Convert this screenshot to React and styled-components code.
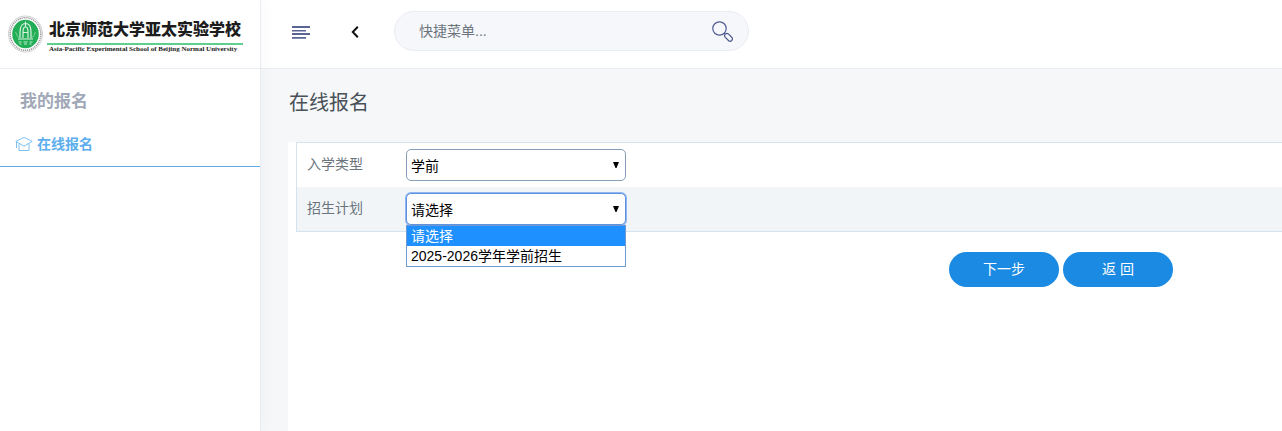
import React, { useState } from 'react'
import styled, { createGlobalStyle } from 'styled-components'

const GlobalStyle = createGlobalStyle`
    * {
        box-sizing: border-box;
    }

    body {
        margin: 0;
        background: #f6f7f9;
        color: #6c757d;
        font-family: "Liberation Sans", "Noto Sans CJK SC", sans-serif;
        font-size: 14px;
        line-height: 20px;
    }
`

const Page = styled.div`
    display: flex;
    min-height: 100vh;
    overflow: hidden;
`

const Sidebar = styled.aside`
    flex: 0 0 261px;
    border-right: 1px solid #e9ecf3;
    background: #fff;
    box-shadow: 0 0 16px rgba(60, 60, 80, 0.04);
    z-index: 1;
`

const Brand = styled.a`
    display: flex;
    align-items: center;
    gap: 4px;
    height: 69px;
    padding: 0 8px;
    border-bottom: 1px solid #e9ecf3;
    color: #1c1c1c;
    text-decoration: none;
`

const BrandText = styled.div`
    display: flex;
    flex-direction: column;
    padding-top: 2px;
    white-space: nowrap;
`

const BrandName = styled.span`
    padding: 0 2px;
    border-bottom: 2px solid #5fcf8f;
    font-size: 16px;
    font-weight: 900;
    line-height: 26px;
`

const BrandSub = styled.span`
    padding-left: 2px;
    font-family: "Liberation Serif", serif;
    font-size: 7px;
    font-weight: bold;
    line-height: 8px;
`

const MenuTitle = styled.h2`
    margin: 0;
    padding: 21px 20px 0;
    color: #a1a8b8;
    font-size: 17px;
    line-height: 24px;
`

const MenuLink = styled.a`
    display: flex;
    align-items: center;
    gap: 4px;
    height: 46px;
    margin-top: 7px;
    padding: 0 15px;
    border-bottom: 1px solid #5caae6;
    color: #5caeed;
    font-weight: bold;
    text-decoration: none;
`

const Main = styled.main`
    flex: 1;
    min-width: 0;
    display: flex;
    flex-direction: column;
`

const TopBar = styled.header`
    display: flex;
    align-items: center;
    height: 69px;
    padding: 0 25px 6px;
    border-bottom: 1px solid #e9ecf3;
    background: #fff;
`

const IconButton = styled.button`
    display: flex;
    align-items: center;
    justify-content: center;
    width: 30px;
    height: 30px;
    margin-right: 24px;
    padding: 2px 0 0;
    border: 0;
    background: none;
    cursor: pointer;
`

const SearchBox = styled.form`
    display: flex;
    align-items: center;
    flex: 0 1 355px;
    height: 40px;
    padding: 0 15px 0 24px;
    border: 1px solid #e9ecf3;
    border-radius: 20px;
    background: #f6f7fa;
`

const SearchInput = styled.input`
    flex: 1;
    min-width: 0;
    padding: 0;
    border: 0;
    outline: 0;
    background: none;
    font: inherit;

    &::placeholder {
        color: #6c757d;
        opacity: 1;
    }
`

const SearchButton = styled.button`
    display: flex;
    padding: 0;
    border: 0;
    background: none;
    cursor: pointer;
`

const PageTitle = styled.h1`
    margin: 0;
    padding: 20px 28px;
    color: #495057;
    font-size: 20px;
    font-weight: normal;
    line-height: 28px;
`

const Panel = styled.section`
    flex: 1;
    margin: 5px 0 0 27px;
    padding-left: 8px;
    background: #fff;
`

const Fields = styled.div`
    border: 1px solid #d5e3ee;
    border-right: 0;
`

const FieldRow = styled.div`
    display: flex;
    align-items: center;
    height: 44px;
    padding-left: 10px;
    background: ${props => props.$striped ? '#f1f5f8' : '#fff'};
`

const FieldLabel = styled.label`
    width: 99px;
    padding-bottom: 2px;
`

const SelectBox = styled.div`
    position: relative;
    width: 220px;
`

const Select = styled.select`
    display: block;
    width: 100%;
    height: 32px;
    padding: 2px 20px 0 4px;
    border: 1px solid ${props => props.$open ? '#5f92dc' : '#859fb8'};
    border-radius: 5px;
    outline: 0;
    appearance: none;
    background: #fff;
    box-shadow: ${props => props.$open ? '0 0 0 1px #8fb5f3' : 'none'};
    color: #000;
    font: inherit;
`

const Arrow = styled.svg`
    position: absolute;
    top: 13px;
    right: 7px;
    pointer-events: none;
`

const OptionList = styled.ul`
    position: absolute;
    top: 100%;
    left: 0;
    right: 0;
    margin: 0;
    padding: 0;
    border: 1px solid #6f97d3;
    background: #fff;
    list-style: none;
`

const Option = styled.li`
    padding: 0 4px;
    background: ${props => props.$active ? '#1e90ff' : '#fff'};
    color: ${props => props.$active ? '#fff' : '#000'};
    cursor: default;
`

const Actions = styled.div`
    display: flex;
    justify-content: flex-end;
    gap: 4px;
    padding: 20px 109px 20px 0;
`

const ActionButton = styled.button`
    width: 110px;
    height: 35px;
    padding: 0 0 2px;
    border: 0;
    border-radius: 18px;
    background: #1a8ae3;
    color: #fff;
    font: inherit;
    cursor: pointer;
`

const Emblem = () => (
    <svg width='35' height='38' viewBox='0 0 35 38' fill='none' aria-hidden='true'>
        <ellipse cx='17.5' cy='19' rx='17' ry='18' fill='#fff' stroke='#bbb' strokeWidth='.7' />
        <ellipse cx='17.5' cy='19' rx='15.3' ry='16.3' stroke='#999' strokeWidth='1.5' strokeDasharray='1.2 .8' />
        <ellipse cx='17.5' cy='19' rx='13.3' ry='14.3' fill='#22ad57' />
        <path d='M12 23v-6c0-6 2.5-8.5 5.5-8.5S23 11 23 17v6M10 24h15M15 23v-6.5c0-3 1-4.5 2.5-4.5s2.5 1.5 2.5 4.5V23M17.5 6.5V12M15.5 17.5h4' stroke='#d9f3e1' strokeWidth='1.2' />
        <path d='M7.5 17c2 3 1 5 3.5 5M27.5 17c-2 3-1 5-3.5 5' stroke='#7dce94' />
        <path d='M10.5 27h3M15.5 27h4M21.5 27h3M11.5 29h2M16 29h3M21.5 29h2' stroke='#bdebcc' />
    </svg>
)

const CapIcon = () => (
    <svg width='18' height='16' viewBox='0 0 18 16' fill='none' stroke='#7fc0f0' aria-hidden='true'>
        <path d='M.8 5.4L9 1.4l8.2 4L9 10.2zM4 7.5v7h10v-7M1.5 6v6' />
    </svg>
)

const MenuIcon = () => (
    <svg width='18' height='13' viewBox='0 0 18 13' fill='#5a6593' aria-hidden='true'>
        <path d='M0 0h18v2H0zM0 4h14v1.5H0zM0 7h18v2H0zM0 11h14v1.7H0z' />
    </svg>
)

const BackIcon = () => (
    <svg width='8' height='12' viewBox='0 0 8 12' fill='none' stroke='#111' strokeWidth='2' aria-hidden='true'>
        <path d='M6.8 .8L1.8 6l5 5.2' />
    </svg>
)

const SearchIcon = () => (
    <svg width='21' height='21' viewBox='0 0 21 21' fill='none' stroke='#4f5b93' strokeWidth='1.2' aria-hidden='true'>
        <circle cx='7.5' cy='7.5' r='6.7' />
        <path d='M12 12l1.2 1.2' />
        <rect x='12' y='14' width='9' height='4.6' rx='2.3' transform='rotate(45 16.5 16.3)' />
    </svg>
)

const SelectField = ({ id, label, options, striped, open }) => {
    const [value, setValue] = useState(options[0])

    return (
        <FieldRow $striped={striped}>
            <FieldLabel htmlFor={id}>{label}</FieldLabel>
            <SelectBox>
                <Select id={id} value={value} $open={open} onChange={e => setValue(e.target.value)}>
                    {options.map(option => <option key={option}>{option}</option>)}
                </Select>
                <Arrow width='6' height='6' viewBox='0 0 6 6' aria-hidden='true'>
                    <path d='M0 0h6L3.5 6h-1z' fill='#000' />
                </Arrow>
                {open && (
                    <OptionList role='listbox' aria-label={label}>
                        {options.map(option => (
                            <Option
                                key={option}
                                role='option'
                                aria-selected={option === value}
                                $active={option === value}
                                onClick={() => setValue(option)}
                            >
                                {option}
                            </Option>
                        ))}
                    </OptionList>
                )}
            </SelectBox>
        </FieldRow>
    )
}

const App = () => {
    return (
        <Page>
            <GlobalStyle />
            <Sidebar>
                <Brand href='#'>
                    <Emblem />
                    <BrandText>
                        <BrandName>北京师范大学亚太实验学校</BrandName>
                        <BrandSub>Asia-Pacific Experimental School of Beijing Normal University</BrandSub>
                    </BrandText>
                </Brand>
                <nav>
                    <MenuTitle>我的报名</MenuTitle>
                    <MenuLink href='#'><CapIcon />在线报名</MenuLink>
                </nav>
            </Sidebar>
            <Main>
                <TopBar>
                    <IconButton type='button' aria-label='菜单'><MenuIcon /></IconButton>
                    <IconButton type='button' aria-label='返回'><BackIcon /></IconButton>
                    <SearchBox onSubmit={e => e.preventDefault()}>
                        <SearchInput type='text' placeholder='快捷菜单...' aria-label='快捷菜单' />
                        <SearchButton type='submit' aria-label='搜索'><SearchIcon /></SearchButton>
                    </SearchBox>
                </TopBar>
                <PageTitle>在线报名</PageTitle>
                <Panel>
                    <Fields>
                        <SelectField id='type' label='入学类型' options={['学前']} />
                        <SelectField id='plan' label='招生计划' options={['请选择', '2025-2026学年学前招生']} striped open />
                    </Fields>
                    <Actions>
                        <ActionButton type='button'>下一步</ActionButton>
                        <ActionButton type='button'>返 回</ActionButton>
                    </Actions>
                </Panel>
            </Main>
        </Page>
    )
}

export default App
